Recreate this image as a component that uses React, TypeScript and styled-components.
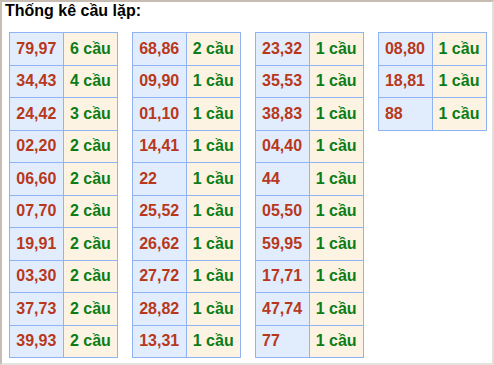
import React from 'react'
import styled, { createGlobalStyle } from 'styled-components'

const GlobalStyle = createGlobalStyle`
	html, body {
		margin: 0;
		padding: 0;
		background: #ffffff;
	}
`

const Frame = styled.div`
	box-sizing: border-box;
	width: 494px;
	height: 365px;
	border-style: solid;
	border-width: 2px;
	border-color: #c6bcb1 #e2ded8 #e6e2dd #c6bcb1;
	font-family: 'Liberation Sans', Arial, sans-serif;
	overflow: hidden;
`

const Title = styled.div`
	font-size: 16px;
	font-weight: bold;
	line-height: 18px;
	color: #000;
	padding-left: 3px;
	margin-bottom: 12px;
`

const Tables = styled.div`
	display: flex;
	align-items: flex-start;
	gap: 13.7px;
	padding-left: 7.3px;
`

const Table = styled.table`
	border-collapse: collapse;
	font-size: 16px;
	font-weight: bold;
`

const Row = styled.tr`
	height: 32.5px;
`

const Cell = styled.td<{ $kind: 'pair' | 'count' }>`
	border: 1px solid #8fb3f3;
	padding: 0 0 0 6px;
	box-sizing: border-box;
	width: ${(p) => (p.$kind === 'pair' ? '53.6px' : '54.6px')};
	background: ${(p) => (p.$kind === 'pair' ? '#e1edfc' : '#fdf3e2')};
	color: ${(p) => (p.$kind === 'pair' ? '#b8381c' : '#0b7d18')};
	text-align: left;
	white-space: nowrap;
`

const columns: [string, number][][] = [
	[
		['79,97', 6],
		['34,43', 4],
		['24,42', 3],
		['02,20', 2],
		['06,60', 2],
		['07,70', 2],
		['19,91', 2],
		['03,30', 2],
		['37,73', 2],
		['39,93', 2],
	],
	[
		['68,86', 2],
		['09,90', 1],
		['01,10', 1],
		['14,41', 1],
		['22', 1],
		['25,52', 1],
		['26,62', 1],
		['27,72', 1],
		['28,82', 1],
		['13,31', 1],
	],
	[
		['23,32', 1],
		['35,53', 1],
		['38,83', 1],
		['04,40', 1],
		['44', 1],
		['05,50', 1],
		['59,95', 1],
		['17,71', 1],
		['47,74', 1],
		['77', 1],
	],
	[
		['08,80', 1],
		['18,81', 1],
		['88', 1],
	],
]

export default function App() {
	return (
		<>
			<GlobalStyle />
			<Frame>
				<Title>Thống kê cầu lặp:</Title>
				<Tables>
					{columns.map((rows, i) => (
						<Table key={i}>
							<tbody>
								{rows.map(([pair, count]) => (
									<Row key={pair}>
										<Cell $kind="pair">{pair}</Cell>
										<Cell $kind="count">{count} cầu</Cell>
									</Row>
								))}
							</tbody>
						</Table>
					))}
				</Tables>
			</Frame>
		</>
	)
}
